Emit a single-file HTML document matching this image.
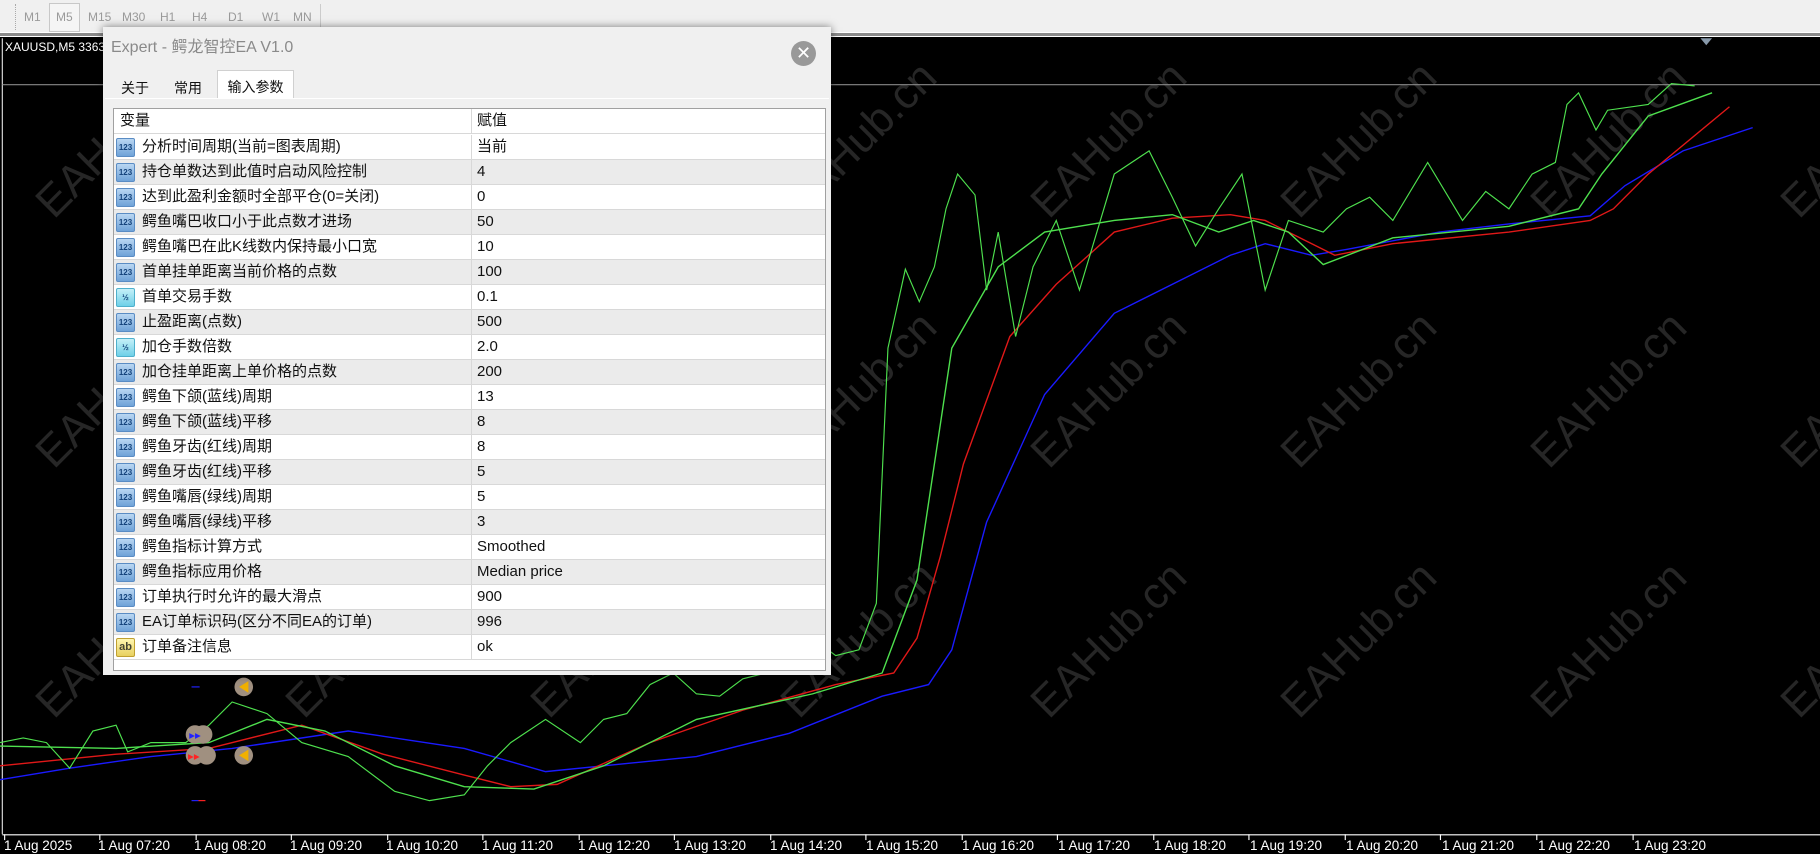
<!DOCTYPE html>
<html><head><meta charset="utf-8">
<style>
*{margin:0;padding:0;box-sizing:border-box}
body{width:1820px;height:854px;overflow:hidden;background:#000;font-family:"Liberation Sans","Noto Sans CJK SC",sans-serif;position:relative}
#tb{position:absolute;left:0;top:0;width:1820px;height:33px;background:#f0f0f0;border-bottom:1px solid #fff}
#tb .sep{position:absolute;left:15px;top:4px;width:3px;height:26px;border-left:1px dotted #aaa}
#tb span{position:absolute;top:10px;font-size:12px;color:#9a9a9a}
#tb .act{position:absolute;left:49px;top:3px;width:31px;height:29px;border:1px solid #c8c8c8;background:#f5f5f5}
#bar{position:absolute;left:0;top:33px;width:1820px;height:4px;background:#8a8a8a;border-bottom:1px solid #fff}
#chart{position:absolute;left:0;top:0}
.wm{position:absolute;font-size:44px;color:#262626;transform:rotate(-45deg);white-space:nowrap;font-family:"Liberation Sans",sans-serif}
.ax{position:absolute;top:838px;font-size:13.5px;color:#fff;white-space:nowrap}
#dlg{position:absolute;left:103px;top:27px;width:728px;height:648px;background:#f0f0f0;box-shadow:0 0 8px rgba(0,0,0,.5)}
#ttl{position:absolute;left:8px;top:6px;font-size:16px;color:#8a8a8a}
#cls{position:absolute;left:688px;top:14px;width:25px;height:25px;border-radius:50%;background:#999;color:#fff;font-size:18px;line-height:25px;text-align:center}
.tab{position:absolute;top:45px;height:26px;font-size:14px;color:#111;padding:6px 0 0 0;text-align:center}
#panel{position:absolute;left:2px;top:71px;width:724px;height:575px;border-top:1px solid #fff}
#tbl{position:absolute;left:10px;top:81px;width:713px;height:563px;background:#fff;border:1px solid #a0a0a0}
.r{position:absolute;left:0;width:711px;height:25px;border-bottom:1px solid #d8d8d8;font-size:15px;color:#111;line-height:24px}
.r.g{background:#ebebeb}
.r .n{position:absolute;left:28px;top:0;white-space:nowrap}
.r .v{position:absolute;left:363px;top:0;white-space:nowrap}
.r .d{position:absolute;left:357px;top:0;width:1px;height:25px;background:#d8d8d8}
.ic{position:absolute;left:2px;top:3px;width:19px;height:19px;border-radius:2px;background:linear-gradient(#b9d6f2,#6fa2d8);border:1px solid #5a8cc4;font-size:8px;color:#13427a;text-align:center;line-height:17px;font-weight:bold}
.ic.h{background:linear-gradient(#c5f0f8,#6fd0e8);border-color:#4fb0cc}
.ic.a{background:linear-gradient(#fff6b0,#e8d060);border-color:#c0a030;color:#443;font-size:11px}
</style></head><body>
<div id="tb"><div class="sep"></div><div class="act"></div>
<span style="left:24px">M1</span><span style="left:56px">M5</span><span style="left:88px">M15</span><span style="left:122px">M30</span><span style="left:160px">H1</span><span style="left:192px">H4</span><span style="left:228px">D1</span><span style="left:262px">W1</span><span style="left:293px">MN</span>
<div style="position:absolute;left:320px;top:4px;width:1px;height:28px;background:#ccc"></div></div>
<div id="bar"></div>
<div class="wm" style="left:15px;top:115px">EAHub.cn</div>
<div class="wm" style="left:265px;top:115px">EAHub.cn</div>
<div class="wm" style="left:510px;top:115px">EAHub.cn</div>
<div class="wm" style="left:760px;top:115px">EAHub.cn</div>
<div class="wm" style="left:1010px;top:115px">EAHub.cn</div>
<div class="wm" style="left:1260px;top:115px">EAHub.cn</div>
<div class="wm" style="left:1510px;top:115px">EAHub.cn</div>
<div class="wm" style="left:1760px;top:115px">EAHub.cn</div>
<div class="wm" style="left:15px;top:365px">EAHub.cn</div>
<div class="wm" style="left:265px;top:365px">EAHub.cn</div>
<div class="wm" style="left:510px;top:365px">EAHub.cn</div>
<div class="wm" style="left:760px;top:365px">EAHub.cn</div>
<div class="wm" style="left:1010px;top:365px">EAHub.cn</div>
<div class="wm" style="left:1260px;top:365px">EAHub.cn</div>
<div class="wm" style="left:1510px;top:365px">EAHub.cn</div>
<div class="wm" style="left:1760px;top:365px">EAHub.cn</div>
<div class="wm" style="left:15px;top:615px">EAHub.cn</div>
<div class="wm" style="left:265px;top:615px">EAHub.cn</div>
<div class="wm" style="left:510px;top:615px">EAHub.cn</div>
<div class="wm" style="left:760px;top:615px">EAHub.cn</div>
<div class="wm" style="left:1010px;top:615px">EAHub.cn</div>
<div class="wm" style="left:1260px;top:615px">EAHub.cn</div>
<div class="wm" style="left:1510px;top:615px">EAHub.cn</div>
<div class="wm" style="left:1760px;top:615px">EAHub.cn</div>
<svg id="chart" width="1820" height="854" viewBox="0 0 1568 736" preserveAspectRatio="none">
<line x1="2" y1="33" x2="2" y2="719" stroke="#ddd" stroke-width="1"/>
<line x1="2" y1="73" x2="1568" y2="73" stroke="#888" stroke-width="1"/>
<line x1="2" y1="719.5" x2="1568" y2="719.5" stroke="#fff" stroke-width="1"/>
<g stroke="#fff" stroke-width="1"><line x1="4" y1="719" x2="4" y2="724"/><line x1="86" y1="719" x2="86" y2="724"/><line x1="169" y1="719" x2="169" y2="724"/><line x1="251" y1="719" x2="251" y2="724"/><line x1="334" y1="719" x2="334" y2="724"/><line x1="416" y1="719" x2="416" y2="724"/><line x1="499" y1="719" x2="499" y2="724"/><line x1="581" y1="719" x2="581" y2="724"/><line x1="664" y1="719" x2="664" y2="724"/><line x1="746" y1="719" x2="746" y2="724"/><line x1="829" y1="719" x2="829" y2="724"/><line x1="911" y1="719" x2="911" y2="724"/><line x1="994" y1="719" x2="994" y2="724"/><line x1="1076" y1="719" x2="1076" y2="724"/><line x1="1159" y1="719" x2="1159" y2="724"/><line x1="1241" y1="719" x2="1241" y2="724"/><line x1="1324" y1="719" x2="1324" y2="724"/><line x1="1407" y1="719" x2="1407" y2="724"/></g>
<polygon points="1465,33 1475,33 1470,39" fill="#8899aa"/>
<polyline fill="none" stroke="#1a1aff" stroke-width="1.2" points="0,672 60,662 130,652 200,645 300,630 400,645 470,665 520,660 600,652 680,632 760,600 800,590 820,560 850,450 900,340 960,270 1020,240 1060,220 1090,210 1130,220 1160,215 1240,200 1300,193 1370,186 1400,160 1450,130 1510,110"/>
<polyline fill="none" stroke="#e01818" stroke-width="1.2" points="0,660 100,650 180,645 260,625 330,650 400,668 440,678 480,676 560,640 640,612 720,590 770,580 790,550 810,480 830,400 870,290 910,245 960,200 1010,188 1060,185 1090,190 1120,205 1150,220 1200,210 1300,200 1370,190 1390,180 1420,150 1490,92"/>
<polyline fill="none" stroke="#4ee04e" stroke-width="1.2" points="0,643 100,645 180,640 230,620 280,630 340,660 400,678 460,680 520,660 600,620 700,598 760,580 790,500 820,300 860,230 900,200 960,190 1010,185 1050,200 1080,190 1110,200 1140,228 1200,205 1300,195 1360,180 1380,150 1420,100 1475,80"/>
<polyline fill="none" stroke="#4ee04e" stroke-width="1" points="0,640 20,636 40,640 60,662 80,630 100,625 110,648 130,640 160,640 180,625 200,605 230,615 260,640 300,652 340,682 370,690 400,685 420,660 440,640 470,620 500,640 520,620 540,615 560,590 580,580 600,598 620,600 640,585 660,580 680,555 700,550 720,565 740,560 755,520 765,300 780,232 792,260 805,230 815,180 825,150 840,168 850,250 860,200 875,290 890,230 910,190 930,250 945,200 960,150 990,130 1010,170 1030,212 1050,180 1070,150 1090,250 1110,190 1140,200 1160,180 1180,170 1200,190 1230,140 1260,190 1280,165 1300,180 1320,150 1340,140 1350,90 1360,80 1375,112 1385,95 1420,90 1440,72 1460,74"/>
<g><circle cx="210" cy="592" r="8" fill="#a09080"/><polygon points="206,592 214,587 214,597" fill="#f0b000"/>
<circle cx="168" cy="633" r="8" fill="#a09080"/><circle cx="175" cy="633" r="8" fill="#a09080"/><text x="163" y="637" font-size="10" fill="#22f">▸▸</text>
<circle cx="168" cy="651" r="8" fill="#a09080"/><circle cx="178" cy="651" r="8" fill="#a09080"/><text x="162" y="655" font-size="10" fill="#f22">▸▸</text>
<circle cx="210" cy="651" r="8" fill="#a09080"/><polygon points="206,651 214,646 214,656" fill="#f0b000"/>
<line x1="165" y1="592" x2="172" y2="592" stroke="#22f"/><line x1="165" y1="690" x2="171" y2="690" stroke="#22f"/><line x1="171" y1="690" x2="177" y2="690" stroke="#f22"/></g>
</svg>
<div style="position:absolute;left:5px;top:40px;font-size:12px;color:#fff">XAUUSD,M5  3363</div>
<div class="ax" style="left:4px">1 Aug 2025</div>
<div class="ax" style="left:98px">1 Aug 07:20</div>
<div class="ax" style="left:194px">1 Aug 08:20</div>
<div class="ax" style="left:290px">1 Aug 09:20</div>
<div class="ax" style="left:386px">1 Aug 10:20</div>
<div class="ax" style="left:482px">1 Aug 11:20</div>
<div class="ax" style="left:578px">1 Aug 12:20</div>
<div class="ax" style="left:674px">1 Aug 13:20</div>
<div class="ax" style="left:770px">1 Aug 14:20</div>
<div class="ax" style="left:866px">1 Aug 15:20</div>
<div class="ax" style="left:962px">1 Aug 16:20</div>
<div class="ax" style="left:1058px">1 Aug 17:20</div>
<div class="ax" style="left:1154px">1 Aug 18:20</div>
<div class="ax" style="left:1250px">1 Aug 19:20</div>
<div class="ax" style="left:1346px">1 Aug 20:20</div>
<div class="ax" style="left:1442px">1 Aug 21:20</div>
<div class="ax" style="left:1538px">1 Aug 22:20</div>
<div class="ax" style="left:1634px">1 Aug 23:20</div>

<div id="dlg">
<div id="ttl">Expert - 鳄龙智控EA V1.0</div>
<div id="cls">✕</div>
<div class="tab" style="left:8px;width:48px">关于</div>
<div class="tab" style="left:56px;width:58px">常用</div>
<div class="tab" style="left:114px;width:77px;top:43px;height:29px;background:#fff;border:1px solid #d0d0d0;border-bottom:none">输入参数</div>
<div id="panel"></div>
<div id="tbl">
<div class="r" style="top:0"><span class="n" style="left:6px">变量</span><span class="v">赋值</span><span class="d"></span></div>
<div class="r" style="top:26px"><div class="ic">123</div><span class="n">分析时间周期(当前=图表周期)</span><span class="d"></span><span class="v">当前</span></div>
<div class="r g" style="top:51px"><div class="ic">123</div><span class="n">持仓单数达到此值时启动风险控制</span><span class="d"></span><span class="v">4</span></div>
<div class="r" style="top:76px"><div class="ic">123</div><span class="n">达到此盈利金额时全部平仓(0=关闭)</span><span class="d"></span><span class="v">0</span></div>
<div class="r g" style="top:101px"><div class="ic">123</div><span class="n">鳄鱼嘴巴收口小于此点数才进场</span><span class="d"></span><span class="v">50</span></div>
<div class="r" style="top:126px"><div class="ic">123</div><span class="n">鳄鱼嘴巴在此K线数内保持最小口宽</span><span class="d"></span><span class="v">10</span></div>
<div class="r g" style="top:151px"><div class="ic">123</div><span class="n">首单挂单距离当前价格的点数</span><span class="d"></span><span class="v">100</span></div>
<div class="r" style="top:176px"><div class="ic h">½</div><span class="n">首单交易手数</span><span class="d"></span><span class="v">0.1</span></div>
<div class="r g" style="top:201px"><div class="ic">123</div><span class="n">止盈距离(点数)</span><span class="d"></span><span class="v">500</span></div>
<div class="r" style="top:226px"><div class="ic h">½</div><span class="n">加仓手数倍数</span><span class="d"></span><span class="v">2.0</span></div>
<div class="r g" style="top:251px"><div class="ic">123</div><span class="n">加仓挂单距离上单价格的点数</span><span class="d"></span><span class="v">200</span></div>
<div class="r" style="top:276px"><div class="ic">123</div><span class="n">鳄鱼下颌(蓝线)周期</span><span class="d"></span><span class="v">13</span></div>
<div class="r g" style="top:301px"><div class="ic">123</div><span class="n">鳄鱼下颌(蓝线)平移</span><span class="d"></span><span class="v">8</span></div>
<div class="r" style="top:326px"><div class="ic">123</div><span class="n">鳄鱼牙齿(红线)周期</span><span class="d"></span><span class="v">8</span></div>
<div class="r g" style="top:351px"><div class="ic">123</div><span class="n">鳄鱼牙齿(红线)平移</span><span class="d"></span><span class="v">5</span></div>
<div class="r" style="top:376px"><div class="ic">123</div><span class="n">鳄鱼嘴唇(绿线)周期</span><span class="d"></span><span class="v">5</span></div>
<div class="r g" style="top:401px"><div class="ic">123</div><span class="n">鳄鱼嘴唇(绿线)平移</span><span class="d"></span><span class="v">3</span></div>
<div class="r" style="top:426px"><div class="ic">123</div><span class="n">鳄鱼指标计算方式</span><span class="d"></span><span class="v">Smoothed</span></div>
<div class="r g" style="top:451px"><div class="ic">123</div><span class="n">鳄鱼指标应用价格</span><span class="d"></span><span class="v">Median price</span></div>
<div class="r" style="top:476px"><div class="ic">123</div><span class="n">订单执行时允许的最大滑点</span><span class="d"></span><span class="v">900</span></div>
<div class="r g" style="top:501px"><div class="ic">123</div><span class="n">EA订单标识码(区分不同EA的订单)</span><span class="d"></span><span class="v">996</span></div>
<div class="r" style="top:526px"><div class="ic a">ab</div><span class="n">订单备注信息</span><span class="d"></span><span class="v">ok</span></div>
</div>
</div>
</body></html>
